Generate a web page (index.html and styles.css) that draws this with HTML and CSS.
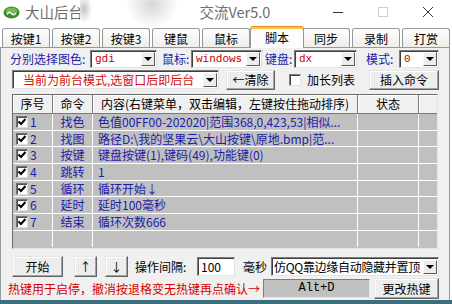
FILE: index.html
```html
<!DOCTYPE html>
<html>
<head>
<meta charset="utf-8">
<link rel="stylesheet" href="styles.css">
</head>
<body>
<div class="window">
  <div class="titlebar">
    <svg class="logo" width="17" height="13" viewBox="0 0 17 13">
      <ellipse cx="8.5" cy="6.5" rx="8" ry="6" fill="#3d8a2c"/>
      <ellipse cx="8.5" cy="5" rx="6" ry="3.6" fill="#74b84e"/>
      <path d="M4 8.5q2-4 4.5-1t4.5-.5" stroke="#fff" stroke-width="1.3" fill="none"/>
    </svg>
    <span class="title">大山后台按<span class="hid"></span>交流Ver5.0</span>
    <div class="controls">
      <span class="ctl"><svg width="10" height="10"><path d="M0 5.5h10" stroke="#333"/></svg></span>
      <span class="ctl"><svg width="10" height="10"><rect x="0.5" y="0.5" width="9" height="9" fill="none" stroke="#cfcfcf"/></svg></span>
      <span class="ctl"><svg width="10" height="10"><path d="M0 0L10 10M10 0L0 10" stroke="#333"/></svg></span>
    </div>
    <div class="smudge"></div>
  </div>

  <div class="tabs">
    <span class="tab">按键1</span>
    <span class="tab">按键2</span>
    <span class="tab">按键3</span>
    <span class="tab">键鼠</span>
    <span class="tab">鼠标</span>
    <span class="tab on">脚本</span>
    <span class="tab">同步</span>
    <span class="tab">录制</span>
    <span class="tab">打赏</span>
  </div>

  <div class="page">
    <div class="bar bar-a">
      <span class="lbl lbl-color">分别选择图色:</span>
      <span class="combo cb-gdi"><span class="val">gdi</span><span class="drop"></span></span>
      <span class="lbl lbl-mouse">鼠标:</span>
      <span class="combo cb-win"><span class="val">windows</span><span class="drop"></span></span>
      <span class="lbl lbl-key">键盘:</span>
      <span class="combo cb-dx"><span class="val">dx</span><span class="drop"></span></span>
      <span class="lbl lbl-mode">模式:</span>
      <span class="combo cb-mode"><span class="val">0</span><span class="drop"></span></span>
    </div>

    <div class="bar bar-b">
      <span class="combo cb-front"><span class="val">当前为前台模式,选窗口后即后台</span><span class="drop"></span></span>
      <span class="btn btn-clear">←清除</span>
      <span class="chk"></span>
      <span class="chk-text">加长列表</span>
      <span class="btn btn-insert">插入命令</span>
    </div>

    <div class="list">
      <div class="lhead">
        <span>序号</span>
        <span>命令</span>
        <span>内容(右键菜单，双击编辑，左键按住拖动排序)</span>
        <span>状态</span>
        <span></span>
      </div>
      <div class="lbody">
        <span class="c-no"><i class="tick"></i>1</span><span class="c-cmd">找色</span><span class="c-txt">色值00FF00-202020|范围368,0,423,53|相似...</span><span></span><span></span>
        <span class="c-no"><i class="tick"></i>2</span><span class="c-cmd">找图</span><span class="c-txt">路径D:\我的坚果云\大山按键\原地.bmp|范...</span><span></span><span></span>
        <span class="c-no"><i class="tick"></i>3</span><span class="c-cmd">按键</span><span class="c-txt">键盘按键(1),键码(49),功能键(0)</span><span></span><span></span>
        <span class="c-no"><i class="tick"></i>4</span><span class="c-cmd">跳转</span><span class="c-txt">1</span><span></span><span></span>
        <span class="c-no"><i class="tick"></i>5</span><span class="c-cmd">循环</span><span class="c-txt">循环开始↓</span><span></span><span></span>
        <span class="c-no"><i class="tick"></i>6</span><span class="c-cmd">延时</span><span class="c-txt">延时100毫秒</span><span></span><span></span>
        <span class="c-no"><i class="tick"></i>7</span><span class="c-cmd">结束</span><span class="c-txt">循环次数666</span><span></span><span></span>
        <span></span><span></span><span></span><span></span><span></span>
      </div>
    </div>

    <div class="bar bar-c">
      <span class="btn btn-start">开始</span>
      <span class="btn btn-up">↑</span>
      <span class="btn btn-down">↓</span>
      <span class="lbl-gap">操作间隔:</span>
      <span class="num">100</span>
      <span class="lbl-ms">毫秒</span>
      <span class="combo cb-hide"><span class="val">仿QQ靠边缘自动隐藏并置顶</span><span class="drop"></span></span>
    </div>

    <div class="bar bar-d">
      <span class="hint">热键用于启停，撤消按退格变无热键再点确认→</span>
      <span class="hotkey">Alt+D</span>
      <span class="btn btn-hot">更改热键</span>
    </div>
  </div>
  <div class="edge"></div>
</div>
</body>
</html>
```

FILE: styles.css
```css
body {
    margin: 0;
    width: 452px;
    height: 304px;
    overflow: hidden;
    background: #fff;
    font-family: "Noto Sans CJK SC", "Noto Sans", sans-serif;
    font-size: 12px;
    line-height: 16px;
    color: #000;
}

.window {
    position: relative;
    height: 304px;
}

/* title bar */
.titlebar {
    position: relative;
    display: flex;
    align-items: center;
    height: 24px;
    background: #fff;
}
.logo {
    margin: 1px 5px 0 3px;
}
.title {
    font-size: 14.5px;
    line-height: 24px;
    color: #6e6e6e;
    white-space: nowrap;
}
.title .hid {
    display: inline-block;
    width: 102px;
}
.controls {
    display: flex;
    margin-left: auto;
    margin-right: 2px;
}
.ctl {
    display: flex;
    width: 45px;
    height: 24px;
    align-items: center;
    justify-content: center;
}
.smudge {
    position: absolute;
    left: 80px;
    top: 0;
    width: 119px;
    height: 27px;
    background:
        radial-gradient(ellipse 8px 14px at 4px 9px, rgba(185,185,185,.85), rgba(255,255,255,0)),
        radial-gradient(ellipse 26px 24px at 72px 4px, rgba(212,212,212,.95), rgba(255,255,255,0)),
        #fff;
}

/* tabs */
.tabs {
    position: relative;
    z-index: 1;
    display: flex;
    align-items: flex-end;
    height: 23px;
    padding-left: 2px;
}
.tab {
    box-sizing: border-box;
    width: 48px;
    height: 19px;
    margin-right: 2px;
    padding-top: 1px;
    border: 1px solid #919b9c;
    border-bottom: none;
    border-radius: 3px 3px 0 0;
    background: linear-gradient(#fefefe, #efeee9);
    text-align: center;
    line-height: 17px;
}
.tab.on {
    position: relative;
    width: 54px;
    height: 22px;
    margin: 0 -2px -1px -2px;
    padding-top: 2px;
    border-top-color: #e68b2c;
    background: #fcfcfe;
    box-shadow: inset 0 2px #ffc73c;
    line-height: 18px;
}

/* page */
.page {
    box-sizing: border-box;
    width: 450px;
    height: 253px;
    padding-top: 1px;
    border: 1px solid #919b9c;
    border-bottom: none;
    background: #f0f0f0;
}
.edge {
    height: 4px;
    background: #3b6f7e;
}

.bar {
    display: flex;
    align-items: center;
    white-space: nowrap;
}
.bar-a {
    height: 18px;
    margin-top: 1px;
    padding-left: 9px;
}
.bar-b {
    height: 19px;
    margin-top: 2px;
    padding-left: 11px;
}
.bar-c {
    height: 21px;
    margin-top: 7px;
    padding-left: 11px;
}
.bar-d {
    height: 21px;
    margin-top: 1px;
    padding-left: 7px;
}

.lbl {
    color: #1c1ca8;
}
.lbl-color { width: 80px; }
.lbl-mouse { width: 29px; margin-left: 5px; }
.lbl-key { width: 29px; margin-left: 3px; }
.lbl-mode { width: 33px; margin-left: 9px; }

/* combo boxes */
.combo {
    box-sizing: border-box;
    display: flex;
    align-items: center;
    height: 18px;
    background: #fff;
    border: 1px solid;
    border-color: #7c7c7c #e2e2e2 #e2e2e2 #7c7c7c;
    box-shadow: inset 1px 1px #404040;
}
.combo .val {
    flex: 1;
    padding-left: 4px;
    overflow: hidden;
    color: #c40000;
    font-family: "Liberation Mono", monospace;
    font-size: 11px;
}
.drop {
    box-sizing: border-box;
    display: flex;
    flex: none;
    width: 14px;
    height: 14px;
    margin-right: 1px;
    align-items: center;
    justify-content: center;
    background: #ececec;
    border: 1px solid;
    border-color: #fafafa #585858 #585858 #fafafa;
}
.drop::after {
    content: "";
    border-left: 4px solid transparent;
    border-right: 4px solid transparent;
    border-top: 4px solid #000;
}
.cb-gdi { width: 67px; }
.cb-win { width: 71px; }
.cb-dx { width: 63px; }
.cb-mode { width: 40px; }
.cb-front {
    width: 207px;
    height: 19px;
}
.cb-front .val {
    padding-left: 10px;
    font-family: "Noto Sans CJK SC", sans-serif;
    font-size: 12px;
    color: #d01010;
}
.cb-hide {
    width: 168px;
    height: 19px;
    margin-left: 4px;
}
.cb-hide .val {
    padding-left: 2px;
    font-family: "Noto Sans CJK SC", sans-serif;
    font-size: 12px;
    letter-spacing: -0.3px;
    color: #000;
}

/* buttons */
.btn {
    box-sizing: border-box;
    display: flex;
    height: 20px;
    align-items: center;
    justify-content: center;
    background: #ededed;
    border: 1px solid;
    border-color: #e6e6e6 #646464 #646464 #e6e6e6;
    box-shadow: inset -1px -1px #a3a3a3, inset 1px 1px #fff;
}
.btn-clear { width: 49px; margin-left: 7px; }
.btn-insert { width: 70px; margin-left: 14px; }
.btn-start { width: 51px; height: 21px; }
.btn-up { width: 23px; height: 21px; margin-left: 11px; }
.btn-down { width: 23px; height: 21px; margin-left: 8px; }
.btn-hot { width: 65px; height: 21px; margin-left: 4px; }

.chk {
    box-sizing: border-box;
    width: 12px;
    height: 12px;
    margin-left: 14px;
    background: #fff;
    border: 1px solid;
    border-color: #808080 #e4e4e4 #e4e4e4 #808080;
    box-shadow: inset 1px 1px #404040;
}
.chk-text {
    margin-left: 6px;
}

/* list view */
.list {
    box-sizing: border-box;
    width: 426px;
    height: 155px;
    margin: 5px 0 0 11px;
    overflow: hidden;
    border: 1px solid;
    border-color: #6a6a6a #e6e6e6 #e6e6e6 #6a6a6a;
    background: #c0c0c0;
}
.lhead {
    display: grid;
    grid-template-columns: 40px 40px 265px 61px 18px;
    height: 19px;
    box-sizing: border-box;
    border-bottom: 1px solid #7a7a7a;
    background: #f0f0f0;
}
.lhead span {
    border-right: 1px solid #7a7a7a;
    box-shadow: inset 1px 1px #fff;
    text-align: center;
    line-height: 18px;
    white-space: nowrap;
    overflow: hidden;
}
.lhead span:last-child {
    border-right: none;
}
.lbody {
    display: grid;
    grid-template-columns: 39px 39px 264px 60px 18px;
    grid-auto-rows: 15.7px;
    gap: 1px;
    background: #fff;
}
.lbody span {
    background: #c0c0c0;
    color: #1c1ca8;
    line-height: 15.7px;
    white-space: nowrap;
    overflow: hidden;
}
.lbody .c-no {
    display: flex;
    align-items: center;
    padding-left: 3px;
}
.lbody .c-cmd {
    text-align: center;
}
.lbody .c-txt {
    padding-left: 5px;
}
.tick {
    box-sizing: border-box;
    display: inline-block;
    width: 12px;
    height: 12px;
    margin-right: 2px;
    background: #fff url("data:image/svg+xml;utf8,<svg xmlns='http://www.w3.org/2000/svg' width='10' height='10'><path d='M1.5 4.5l2.5 2.5 4.5-5' stroke='black' stroke-width='2' fill='none'/></svg>") center no-repeat;
    border: 1px solid;
    border-color: #707070 #dcdcdc #dcdcdc #707070;
    box-shadow: inset 1px 1px #505050;
}

/* bottom rows */
.lbl-gap {
    width: 62px;
    margin-left: 7px;
}
.num {
    box-sizing: border-box;
    width: 38px;
    height: 19px;
    padding-left: 3px;
    background: #fff;
    border: 1px solid;
    border-color: #7c7c7c #e2e2e2 #e2e2e2 #7c7c7c;
    box-shadow: inset 1px 1px #404040;
    line-height: 17px;
}
.lbl-ms {
    margin-left: 8px;
}
.hint {
    width: 255px;
    color: #d40000;
}
.hotkey {
    box-sizing: border-box;
    width: 107px;
    height: 19px;
    background: #c0c0c0;
    border: 1px solid;
    border-color: #7c7c7c #e8e8e8 #e8e8e8 #7c7c7c;
    text-align: center;
    font-family: "Liberation Mono", monospace;
    font-size: 12px;
    line-height: 17px;
}
```
